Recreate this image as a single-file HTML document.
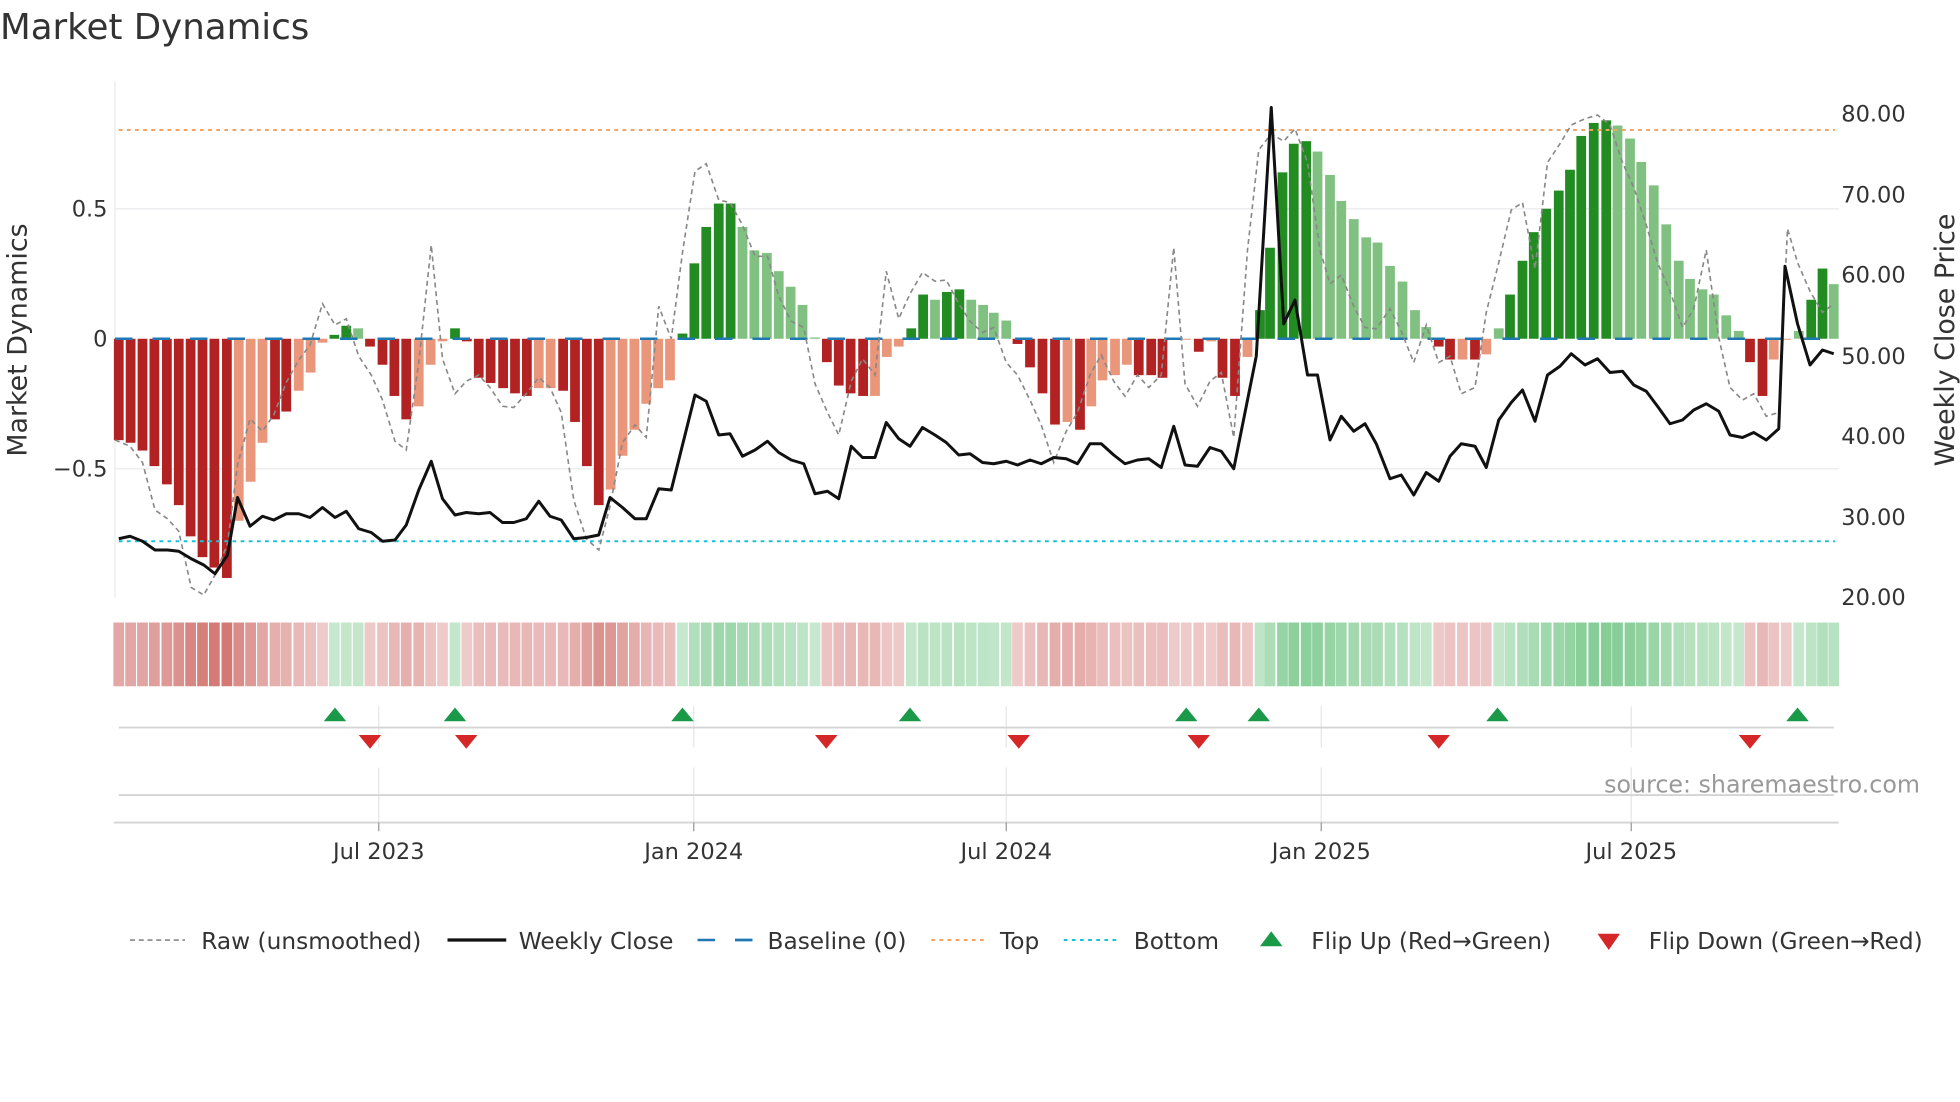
<!DOCTYPE html>
<html><head><meta charset="utf-8"><style>
html,body{margin:0;padding:0;background:#fff;}
svg{display:block;font-family:"DejaVu Sans","Liberation Sans",sans-serif;}
</style></head><body>
<svg id="s" width="1960" height="1102" viewBox="0 0 1568 881.6" xmlns="http://www.w3.org/2000/svg">
<rect width="1568" height="882" fill="#fff"/>
<text x="0" y="31" font-size="28.5" fill="#333">Market Dynamics</text>
<g id="grid">
<line x1="92" y1="167" x2="1471" y2="167" stroke="#eceef0" stroke-width="1.2"/>
<line x1="92" y1="375" x2="1471" y2="375" stroke="#eceef0" stroke-width="1.2"/>
<line x1="92" y1="65" x2="92" y2="478" stroke="#eaeaea" stroke-width="1"/>
</g>
<g id="bars"></g>
<line x1="92" y1="271" x2="1471" y2="271" stroke="#1f77b4" stroke-width="2" stroke-dasharray="14,16"/>
<line x1="95" y1="104" x2="1468" y2="104" stroke="#f4a261" stroke-width="1.6" stroke-dasharray="3,3.5"/>
<line x1="95" y1="433" x2="1468" y2="433" stroke="#17c3d6" stroke-width="1.6" stroke-dasharray="3,3.5"/>
<polyline id="raw" fill="none" stroke="#888" stroke-width="1.3" stroke-dasharray="4,3"/>
<polyline id="close" fill="none" stroke="#111" stroke-width="2.4" stroke-linejoin="round"/>
<g font-size="18" fill="#333">
<text x="86" y="173" text-anchor="end">0.5</text>
<text x="86" y="277" text-anchor="end">0</text>
<text x="86" y="381" text-anchor="end">−0.5</text>
<text x="1473" y="97">80.00</text>
<text x="1473" y="162">70.00</text>
<text x="1473" y="226">60.00</text>
<text x="1473" y="291">50.00</text>
<text x="1473" y="355">40.00</text>
<text x="1473" y="420">30.00</text>
<text x="1473" y="484">20.00</text>
</g>
<text transform="translate(21,272) rotate(-90)" font-size="21.5" fill="#333" text-anchor="middle">Market Dynamics</text>
<text transform="translate(1563,272) rotate(-90)" font-size="21.5" fill="#333" text-anchor="middle">Weekly Close Price</text>
<g id="heat"></g>
<g stroke="#e6e6e6" stroke-width="1">
<line x1="303" y1="565" x2="303" y2="598"/><line x1="555" y1="565" x2="555" y2="598"/><line x1="805" y1="565" x2="805" y2="598"/><line x1="1057" y1="565" x2="1057" y2="598"/><line x1="1305" y1="565" x2="1305" y2="598"/>
<line x1="303" y1="614" x2="303" y2="658"/><line x1="555" y1="614" x2="555" y2="658"/><line x1="805" y1="614" x2="805" y2="658"/><line x1="1057" y1="614" x2="1057" y2="658"/><line x1="1305" y1="614" x2="1305" y2="658"/>
</g>
<line x1="95" y1="582" x2="1467" y2="582" stroke="#d4d4d4" stroke-width="1.5"/>
<line x1="95" y1="636" x2="1467" y2="636" stroke="#d4d4d4" stroke-width="1.5"/>
<line x1="91" y1="658" x2="1471" y2="658" stroke="#d4d4d4" stroke-width="1.5"/>
<g stroke="#999" stroke-width="1"><line x1="303" y1="658" x2="303" y2="665"/><line x1="555" y1="658" x2="555" y2="665"/><line x1="805" y1="658" x2="805" y2="665"/><line x1="1057" y1="658" x2="1057" y2="665"/><line x1="1305" y1="658" x2="1305" y2="665"/></g>
<g id="flips"></g>
<text x="1536" y="634" font-size="19" fill="#999" text-anchor="end">source: sharemaestro.com</text>
<g font-size="18" fill="#333" text-anchor="middle">
<text x="303" y="687">Jul 2023</text><text x="555" y="687">Jan 2024</text><text x="805" y="687">Jul 2024</text><text x="1057" y="687">Jan 2025</text><text x="1305" y="687">Jul 2025</text>
</g>
<g font-size="18.6" fill="#333">
<line x1="104" y1="752" x2="148" y2="752" stroke="#888" stroke-width="1.3" stroke-dasharray="4,3"/>
<text x="161" y="759">Raw (unsmoothed)</text>
<line x1="358" y1="752" x2="405" y2="752" stroke="#111" stroke-width="2.6"/>
<text x="415" y="759">Weekly Close</text>
<line x1="558" y1="752" x2="602" y2="752" stroke="#1f77b4" stroke-width="2" stroke-dasharray="14,16"/>
<line x1="588" y1="752" x2="602" y2="752" stroke="#1f77b4" stroke-width="2"/>
<text x="614" y="759">Baseline (0)</text>
<line x1="745" y1="752" x2="790" y2="752" stroke="#f4a261" stroke-width="1.6" stroke-dasharray="3,3.5"/>
<text x="800" y="759">Top</text>
<line x1="851" y1="752" x2="895" y2="752" stroke="#17c3d6" stroke-width="1.6" stroke-dasharray="3,3.5"/>
<text x="907" y="759">Bottom</text>
<polygon points="1008,757 1026,757 1017,745" fill="#1a9a48"/>
<text x="1049" y="759">Flip Up (Red→Green)</text>
<polygon points="1278,747 1296,747 1287,760" fill="#d62728"/>
<text x="1319" y="759">Flip Down (Green→Red)</text>
</g>
</svg>
<script>
var NS="http://www.w3.org/2000/svg";
function el(p,t,a){var e=document.createElementNS(NS,t);for(var k in a)e.setAttribute(k,a[k]);p.appendChild(e);return e;}
var z1=[[190,-.39,'R'],[209,-.40,'R'],[228,-.43,'R'],[247,-.49,'R'],[267,-.56,'R'],[286,-.64,'R'],[305,-.76,'R'],[324,-.84,'R'],[343,-.88,'R'],[363,-.92,'R'],
[382,-.70,'S'],[401,-.55,'S'],[420,-.40,'S'],[440,-.31,'R'],[458,-.28,'R'],[478,-.20,'S'],[497,-.13,'S'],[516,-.015,'S'],
[535,.015,'G'],[554,.05,'G'],[573,.04,'L'],[592,-.03,'R'],[612,-.10,'R'],[631,-.22,'R'],[650,-.31,'R'],[670,-.26,'S'],[689,-.10,'S'],[708,-.01,'S'],[728,.04,'G'],[747,-.01,'R'],[766,-.15,'R'],[785,-.17,'R'],[805,-.19,'R'],[824,-.21,'R'],[843,-.22,'R'],[862,-.19,'S'],[881,-.19,'S'],[901,-.20,'R'],[920,-.32,'R'],[939,-.49,'R'],[958,-.64,'R'],[977,-.58,'S'],[996,-.45,'S'],[1015,-.35,'S'],[1034,-.25,'S'],[1053,-.19,'S'],[1072,-.16,'S'],
[1092,.02,'G'],[1111,.29,'G'],[1130,.43,'G'],[1150,.52,'G'],[1169,.52,'G'],[1188,.43,'L'],[1207,.34,'L'],[1227,.33,'L'],[1246,.26,'L'],[1265,.2,'L'],[1284,.13,'L'],[1304,.005,'L'],
[1323,-.09,'R'],[1342,-.18,'R'],[1361,-.21,'R'],[1381,-.22,'R'],[1400,-.22,'S'],[1419,-.07,'S'],[1438,-.03,'S'],[1458,.04,'G'],[1477,.17,'G'],[1496,.15,'L'],[1515,.18,'G'],[1535,.19,'G'],[1554,.15,'L']];
var z2=[[5,.13,'L'],[22,.1,'L'],[42,.07,'L'],[60,-.02,'R'],[80,-.11,'R'],[100,-.21,'R'],[120,-.33,'R'],[140,-.32,'S'],[160,-.35,'R'],[178,-.26,'S'],[196,-.16,'S'],[216,-.14,'S'],[235,-.10,'S'],[254,-.14,'R'],[274,-.14,'R'],[292,-.15,'R'],[311,-.003,'S'],[330,-.003,'S'],[350,-.05,'R'],[370,-.01,'S'],[388,-.15,'R'],[408,-.22,'R'],[428,-.07,'S'],
[448,.11,'G'],[464,.35,'G'],[484,.64,'G'],[502,.75,'G'],[522,.76,'G'],[540,.72,'L'],[560,.63,'L'],[578,.53,'L'],[598,.46,'L'],[618,.39,'L'],[636,.37,'L'],[656,.28,'L'],[676,.22,'L'],[696,.11,'L'],[714,.045,'L'],
[734,-.03,'R'],[752,-.08,'R'],[772,-.08,'S'],[792,-.08,'R'],[810,-.06,'S'],[830,.04,'L'],[848,.17,'G'],[868,.3,'G'],[886,.41,'G'],[906,.5,'G'],[926,.57,'G'],[944,.65,'G'],[962,.78,'G'],[982,.83,'G'],[1002,.84,'G'],[1020,.82,'L'],[1040,.77,'L'],[1058,.68,'L'],[1078,.59,'L'],[1098,.44,'L'],[1118,.3,'L'],[1136,.23,'L'],[1156,.19,'L'],[1174,.17,'L'],[1194,.09,'L'],[1214,.03,'L'],
[1232,-.09,'R'],[1252,-.22,'R'],[1270,-.08,'S'],[1290,-.003,'S'],[1310,.03,'L'],[1330,.15,'G'],[1348,.27,'G'],[1366,.21,'L']];
var data=[];z1.forEach(function(d){data.push([d[0]/2,d[1],d[2]]);});z2.forEach(function(d){data.push([784+d[0]/2,d[1],d[2]]);});
var col={R:'#b22222',S:'#e9967a',G:'#228b22',L:'#80c080'};
var bars=document.getElementById('bars'),heat=document.getElementById('heat');
data.forEach(function(d){var x=d[0],v=d[1],h=Math.abs(v)*208;var y=v>0?271-h:271;
if(h<0.8)h=0.8;el(bars,'rect',{x:x-3.9,y:y,width:7.8,height:h,fill:col[d[2]]});
var a=Math.min(1,Math.abs(v));var c;
if(v>=0){var t=0.2+0.7*a;c='rgb('+Math.round(222-(222-110)*t)+','+Math.round(242-(242-195)*t)+','+Math.round(226-(226-130)*t)+')';}
else{var t=0.15+0.75*a;c='rgb('+Math.round(244-(244-205)*t)+','+Math.round(222-(222-100)*t)+','+Math.round(222-(222-95)*t)+')';}
el(heat,'rect',{x:x-4.3,y:498,width:8.6,height:51,fill:c});});
var close=[[95,431],[104,429],[114,433],[124,440],[134,440],[143,441],[153,447],[163,452],[172,459],[182,444],[190,398],[200,421],[210,413],[219,416],[229,411],[239,411],[248,414],[258,406],[268,414],[277,409],[287,423],[297,426],[306,433],[316,432],[325,420],[335,392],[345,369],[354,399],[364,412],[373,410],[383,411],[392,410],[402,418],[411,418],[421,415],[431,401],[440,413],[449,416],[459,431],[469,430],[479,428],[488,398],[498,406],[508,415],[517,415],[527,391],[537,392],[546,356],[556,316],[565,321],[575,348],[584,347],[594,365],[604,360],[614,353],[623,362],[633,368],[643,371],[652,395],[662,393],[671,399],[681,357],[690,366],[700,366],[709,338],[719,351],[728,357],[738,342],[748,348],[757,354],[767,364],[776,363],[786,370],[795,371],[805,369],[814,372],[824,368],[833,371],[843,366],[853,367],[862,371],[872,355],[881,355],[891,364],[900,371],[910,368],[919,367],[929,374],[939,341],[948,372],[958,373],[968,358],[977,361],[987,375],[1005,285],[1017,86],[1027,259],[1036,240],[1046,300],[1054,300],[1064,352],[1073,333],[1083,345],[1092,339],[1101,355],[1112,383],[1121,380],[1131,396],[1141,378],[1151,385],[1160,365],[1169,355],[1180,357],[1189,374],[1199,336],[1209,322],[1218,312],[1228,337],[1238,300],[1248,293],[1257,283],[1268,292],[1278,287],[1288,298],[1298,297],[1307,308],[1317,313],[1326,325],[1336,339],[1346,336],[1355,328],[1365,323],[1375,329],[1384,348],[1394,350],[1403,346],[1413,352],[1423,343],[1428,213],[1438,259],[1448,292],[1458,280],[1467,283]];
var raw=[[92,352],[104,357],[114,370],[124,408],[134,415],[143,425],[153,470],[163,476],[172,460],[182,435],[190,372],[200,335],[210,345],[219,332],[229,306],[239,288],[248,276],[258,243],[268,260],[277,255],[287,285],[297,300],[306,320],[316,353],[325,360],[335,290],[345,196],[354,287],[364,315],[373,305],[383,300],[392,310],[402,325],[411,326],[421,315],[431,302],[440,310],[449,330],[459,400],[469,431],[479,440],[488,405],[498,354],[508,340],[517,350],[527,245],[537,271],[546,202],[556,137],[565,131],[575,160],[584,162],[594,180],[604,205],[614,205],[623,237],[633,257],[643,262],[652,307],[662,330],[671,348],[681,305],[690,287],[700,300],[709,217],[719,255],[728,235],[738,218],[748,225],[757,224],[767,243],[776,257],[786,266],[795,262],[805,290],[814,300],[824,320],[833,340],[843,370],[853,345],[862,330],[872,300],[881,284],[891,305],[900,317],[910,300],[919,310],[929,300],[939,198],[948,307],[958,325],[968,305],[977,298],[987,350],[998,200],[1007,120],[1017,107],[1027,113],[1036,103],[1046,130],[1056,200],[1064,227],[1073,220],[1083,245],[1092,262],[1101,263],[1112,247],[1121,265],[1131,290],[1141,260],[1151,290],[1160,285],[1169,315],[1180,310],[1189,250],[1199,210],[1209,168],[1218,162],[1228,215],[1238,130],[1248,115],[1257,100],[1268,95],[1278,92],[1288,100],[1298,130],[1307,150],[1317,180],[1326,210],[1336,233],[1346,262],[1355,247],[1365,200],[1375,270],[1384,310],[1394,320],[1403,315],[1413,333],[1423,330],[1430,183],[1438,210],[1448,233],[1458,250],[1467,243]];
document.getElementById('close').setAttribute('points',close.map(function(p){return p.join(',');}).join(' '));
document.getElementById('raw').setAttribute('points',raw.map(function(p){return p.join(',');}).join(' '));
var fl=document.getElementById('flips');
[268,364,546,728,949,1007,1198,1438].forEach(function(x){el(fl,'polygon',{points:(x-9)+',577 '+(x+9)+',577 '+x+',566',fill:'#1a9a48'});});
[296,373,661,815,959,1151,1400].forEach(function(x){el(fl,'polygon',{points:(x-9)+',588 '+(x+9)+',588 '+x+',599',fill:'#d62728'});});
</script>
</body></html>
